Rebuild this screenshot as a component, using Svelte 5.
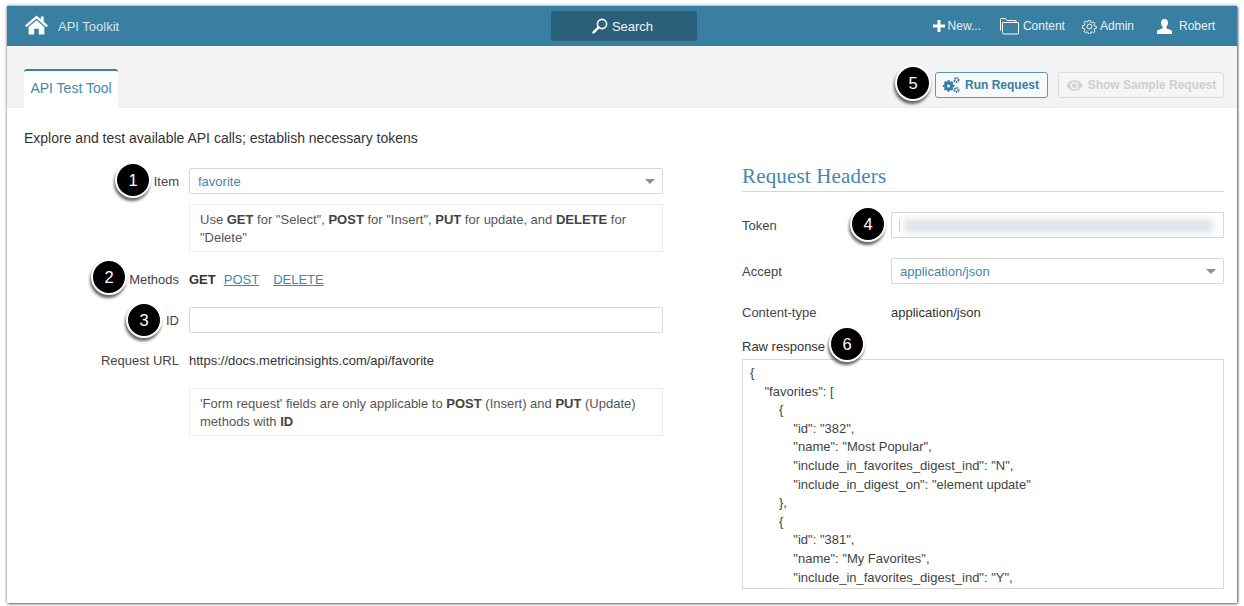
<script>
  const raw = `{
    "favorites": [
        {
            "id": "382",
            "name": "Most Popular",
            "include_in_favorites_digest_ind": "N",
            "include_in_digest_on": "element update"
        },
        {
            "id": "381",
            "name": "My Favorites",
            "include_in_favorites_digest_ind": "Y",`;
</script>

<div class="page">
  <div class="window">
    <header class="top">
      <div class="brand">
        <svg class="home" viewBox="0 0 24 20" width="23" height="20"><path fill="#fff" d="M12 0 L0 10.600 L1.600 12.400 L12 3.200 L22.400 12.400 L24 10.600 L19.500 6.600 V1 H16.500 V3.900 Z M12 5 L3.800 12.200 V20 H9.600 V14 H14.400 V20 H20.200 V12.200 Z"/></svg>
        <span>API Toolkit</span>
      </div>
      <div class="search">
        <svg viewBox="0 0 16 16" width="16" height="16"><circle cx="10" cy="6" r="4.600" fill="none" stroke="#fff" stroke-width="1.600"/><path d="M6.600 9.400 L1.600 14.400" stroke="#fff" stroke-width="2.600" stroke-linecap="round"/></svg>
        <span>Search</span>
      </div>
      <nav class="menu">
        <span class="mi new"><svg viewBox="0 0 12 12" width="12" height="12"><path fill="#fff" d="M4.500 0h3v4.500H12v3H7.500V12h-3V7.500H0v-3h4.500z"/></svg>New...</span>
        <span class="mi content"><svg viewBox="0 0 19 17" width="19" height="17" fill="none" stroke="#fff" stroke-width="1"><path d="M.5 12.500V1.500a1 1 0 0 1 1-1h4l1.500 2h8.500a.5.5 0 0 1 .5.5v1"/><path d="M2.500 14.500V5a.5.5 0 0 1 .5-.5h15a.5.5 0 0 1 .5.5v10.500a.5.5 0 0 1-.5.5H4a1.500 1.500 0 0 1-1.500-1.500z"/></svg>Content</span>
        <span class="mi admin"><svg viewBox="0 0 16 16" width="15" height="15" fill="none" stroke="#fff"><circle cx="8" cy="8" r="2.600"/><path stroke-width="1.100" d="M6.800 1h2.400l.4 2 1.600.7 1.700-1.100 1.600 1.600-1.100 1.700.7 1.600 2 .4v2.200l-2 .4-.7 1.600 1.100 1.700-1.600 1.600-1.700-1.100-1.600.7-.4 2H6.800l-.4-2-1.600-.7-1.700 1.100-1.600-1.600 1.100-1.700-.7-1.600-2-.4V6.900l2-.4.7-1.600-1.100-1.700 1.600-1.600 1.700 1.100 1.600-.7z" transform="translate(.8 .8) scale(.9)"/></svg>Admin</span>
        <span class="mi robert"><svg viewBox="0 0 15 15" width="15" height="15"><path fill="#fff" d="M7.500 0C5.300 0 4 1.600 4 3.800c0 1.600.7 3 1.600 3.900v1.500L.8 11.200C.2 11.500 0 12 0 12.600V15h15v-2.400c0-.6-.2-1.100-.8-1.400L9.400 9.200V7.700c.9-.9 1.600-2.300 1.600-3.900C11 1.600 9.700 0 7.500 0z"/></svg>Robert</span>
      </nav>
    </header>

    <div class="sub">
      <div class="tab">API Test Tool</div>
      <div class="actions">
        <button class="btn run">
          <svg viewBox="0 0 18 16" width="18" height="16"><path fill="#387fa1" d="M5.500 3h2l.3 1.400.9.4 1.200-.8 1.500 1.500-.8 1.200.4.9 1.400.3v2l-1.400.3-.4.9.8 1.200-1.500 1.500-1.200-.8-.9.4-.3 1.400h-2l-.3-1.400-.9-.4-1.200.8L1.900 12.300l.8-1.200-.4-.9L.9 9.900v-2l1.400-.3.4-.9-.8-1.200L3.400 4l1.200.8.9-.4z"/><circle cx="6.500" cy="8.900" r="1.500" fill="#f7f9fa"/><circle cx="14.500" cy="3" r="2" fill="none" stroke="#387fa1" stroke-width="2" stroke-dasharray="1.400 .7"/><circle cx="14.500" cy="13" r="2" fill="none" stroke="#387fa1" stroke-width="2" stroke-dasharray="1.400 .7"/></svg>
          Run Request
        </button>
        <button class="btn off">
          <svg viewBox="0 0 18 12" width="17" height="11"><path fill="#d4d4d4" d="M9 0C5 0 1.800 2.400 0 6c1.800 3.600 5 6 9 6s7.200-2.400 9-6c-1.800-3.600-5-6-9-6zm0 10.200A4.200 4.200 0 1 1 9 1.800a4.200 4.200 0 0 1 0 8.400z"/><circle cx="9" cy="6" r="2.700" fill="#d4d4d4"/></svg>
          Show Sample Request
        </button>
      </div>
    </div>

    <main class="body">
      <p class="intro">Explore and test available API calls; establish necessary tokens</p>
      <div class="cols">
        <section class="left">
          <div class="row"><span class="lab">Item</span>
            <div class="select"><span>favorite</span><i class="caret"></i></div></div>
          <div class="row"><span class="lab"></span>
            <div class="help">Use <b>GET</b> for "Select", <b>POST</b> for "Insert", <b>PUT</b> for update, and <b>DELETE</b> for "Delete"</div></div>
          <div class="row methods"><span class="lab">Methods</span>
            <div class="mlinks"><b>GET</b><a href="#post">POST</a><a href="#delete">DELETE</a></div></div>
          <div class="row idrow"><span class="lab">ID</span><div class="input"></div></div>
          <div class="row urlrow"><span class="lab">Request URL</span><div class="val">https://docs.metricinsights.com/api/favorite</div></div>
          <div class="row helprow2"><span class="lab"></span>
            <div class="help">'Form request' fields are only applicable to <b>POST</b> (Insert) and <b>PUT</b> (Update) methods with <b>ID</b></div></div>
        </section>

        <section class="right">
          <h2>Request Headers</h2>
          <div class="rrow token"><span class="rlab">Token</span><div class="input tokenbox"><i class="cursor"></i><i class="blur"></i></div></div>
          <div class="rrow accept"><span class="rlab">Accept</span><div class="select"><span>application/json</span><i class="caret"></i></div></div>
          <div class="rrow ctype"><span class="rlab">Content-type</span><span class="val">application/json</span></div>
          <div class="rawlab">Raw response</div>
          <pre class="raw">{raw}</pre>
        </section>
      </div>
    </main>

    <span class="badge b1">1</span>
    <span class="badge b2">2</span>
    <span class="badge b3">3</span>
    <span class="badge b4">4</span>
    <span class="badge b5">5</span>
    <span class="badge b6">6</span>
  </div>
</div>

<style>
  :global(body) { margin: 0; background: #fff; }
  .page { padding: 6px 7px 3px 7px; width: 1244px; height: 606px; box-sizing: border-box; overflow: hidden; font-family: "Liberation Sans", Arial, sans-serif; color: #3d3d3d; }
  .window { position: relative; width: 1230px; height: 597px; background: #fff; box-shadow: 0 0 3px rgba(0,0,0,.55), 1px 1px 2px rgba(0,0,0,.45); overflow: hidden; }
  .top { height: 40px; background: #387fa1; display: grid; grid-template-columns: 544px 146px 1fr; align-items: center; color: #fff; font-size: 13px; }
  .brand { display: flex; align-items: center; gap: 10px; padding-left: 18px; color: #d5e4ec; }
  .brand .home { margin-top: -3px; }
  .search { height: 30px; background: #2a6079; border-radius: 3px; display: flex; align-items: center; justify-content: center; gap: 4px; color: #eef4f7; font-size: 13px; margin-left: 0; padding-right: 3px; }
  .menu { display: flex; justify-content: flex-end; align-items: center; padding-right: 22px; color: #e6eff4; font-size: 12px; }
  .mi { display: flex; align-items: center; gap: 4px; }
  .new { gap: 3px; margin-right: 19px; }
  .content { margin-right: 17px; gap: 4px; }
  .admin { gap: 3px; margin-right: 23px; }
  .robert { gap: 7px; }
  .sub { height: 62px; box-sizing: border-box; background: #f3f3f3; border-bottom: 1px solid #ececec; display: flex; justify-content: space-between; align-items: flex-start; padding: 23px 7px 0 17px; }
  .tab { height: 39px; width: 94px; box-sizing: border-box; background: #fff; border-top: 2px solid #387fa1; border-radius: 3px 3px 0 0; color: #3f88ac; font-size: 14px; display: flex; align-items: center; justify-content: center; padding-bottom: 4px; }
  .actions { display: flex; gap: 10px; margin-top: 3px; margin-right: 6px; }
  .btn { height: 26px; border-radius: 3px; font: bold 12px "Liberation Sans", Arial, sans-serif; display: flex; align-items: center; gap: 5px; padding: 0; justify-content: center; background: #f5f5f5; }
  .run { width: 113px; border: 1px solid #5f98b5; color: #387fa1; background: #f7f9fa; padding-right: 2px; }
  .off { width: 166px; border: 1px solid #dcdcdc; color: #cfcfcf; }
  .body { padding: 0 13px 0 17px; }
  .intro { margin: 0; padding-top: 22px; font-size: 14px; line-height: 16px; color: #333; height: 16px; }
  .cols { display: flex; margin-top: 22px; }
  .left { width: 639px; font-size: 13px; flex: none; }
  .row { display: grid; grid-template-columns: 155px 474px; column-gap: 10px; align-items: center; }
  .lab { text-align: right; color: #444; padding-top: 1px; }
  .select, .input { box-sizing: border-box; height: 26px; border: 1px solid #d8d8d8; border-radius: 2px; background: #fff; position: relative; display: flex; align-items: center; padding: 1px 0 0 8px; color: #3f88ac; }
  .caret { position: absolute; right: 7px; top: 10px; border: 5px solid transparent; border-top: 5px solid #8e8e8e; border-bottom: 0; }
  .help { box-sizing: border-box; height: 48px; margin-top: 10px; border: 1px solid #ececec; padding: 6px 10px; font-size: 13px; line-height: 18px; color: #555; }
  .help b { color: #444; }
  .methods { margin-top: 17px; height: 20px; }
  .mlinks { display: flex; gap: 14px; }
  .mlinks b { color: #333; margin-right: -6px; }
  .mlinks a { color: #3f88ac; }
  .idrow { margin-top: 18px; }
  .urlrow { margin-top: 18px; height: 18px; }
  .val { color: #333; }
  .helprow2 .help { margin-top: 19px; }
  .right { margin-left: 79px; width: 482px; font-size: 13px; }
  h2 { margin: 0; height: 25px; margin-top: -2px; font: normal 21px/20px "Liberation Serif", serif; letter-spacing: .17px; color: #4488a9; border-bottom: 1px solid #c9dce5; }
  .rrow { display: grid; grid-template-columns: 149px 333px; align-items: center; }
  .rlab { color: #444; }
  .token { margin-top: 20px; }
  .tokenbox { border-radius: 0; overflow: hidden; }
  .cursor { position: absolute; left: 7px; top: 7px; height: 12px; width: 1px; background: #c8d0d6; }
  .blur { position: absolute; left: 12px; right: 10px; top: 6px; height: 14px; background: #e0e5e9; filter: blur(3px); }
  .accept { margin-top: 20px; }
  .ctype { margin-top: 20px; height: 16px; }
  .rawlab { margin-top: 19px; height: 15px; line-height: 15px; color: #333; }
  .raw { margin: 5px 0 0; box-sizing: border-box; height: 230px; border: 1px solid #d8d8d8; padding: 4px 7px; font: 13px/18.6px "Liberation Sans", Arial, sans-serif; color: #444; overflow: hidden; white-space: pre; }
  .badge { position: absolute; box-sizing: border-box; width: 36px; height: 36px; border-radius: 50%; background: #000; border: 2.500px solid #fff; box-shadow: -1px 3px 3px rgba(0,0,0,.6); color: #fff; font-size: 16.500px; display: flex; align-items: center; justify-content: center; }
  .b1 { left: 108px; top: 156px; }
  .b2 { left: 84px; top: 253px; }
  .b3 { left: 119px; top: 296px; }
  .b4 { left: 843px; top: 200px; }
  .b5 { left: 888px; top: 59px; }
  .b6 { left: 822px; top: 320px; }
</style>
